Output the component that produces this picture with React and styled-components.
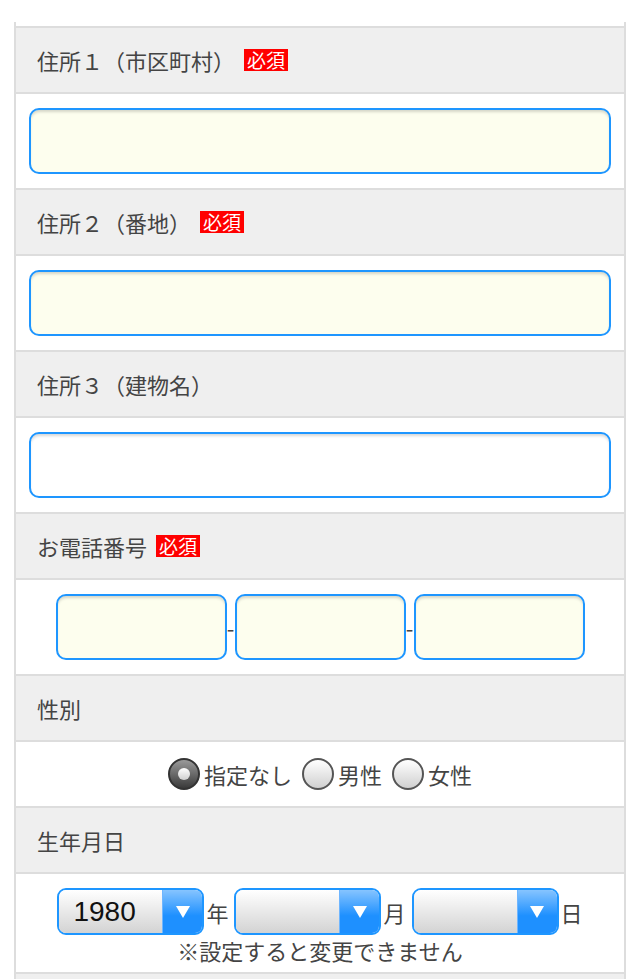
import React from "react";
import styled, { createGlobalStyle } from "styled-components";

const GlobalStyle = createGlobalStyle`
  html, body {
    margin: 0;
    padding: 0;
    background: #fff;
  }
  body {
    font-family: "Noto Sans CJK JP", "Noto Sans", sans-serif;
    color: #444;
  }
  * {
    box-sizing: border-box;
  }
`;

const Page = styled.div`
  padding-top: 22px;
  width: 640px;
`;

const Form = styled.div`
  margin: 0 14px;
  padding-top: 4px;
  border-left: 2px solid #ddd;
  border-right: 2px solid #ddd;
`;

const Head = styled.div`
  display: flex;
  align-items: center;
  height: 68px;
  padding-left: 21px;
  background: #efefef;
  border-top: 2px solid #ddd;
  border-bottom: 2px solid #ddd;
  font-size: 22px;
  line-height: 1;
  color: #444;
`;

const Required = styled.span`
  display: inline-block;
  margin-left: 9px;
  padding: 0 3px;
  background: #f00;
  color: #fff;
  font-size: 19px;
  line-height: 22px;
  height: 22px;
`;

const Body = styled.div`
  display: flex;
  flex-direction: ${({ $column }) => ($column ? "column" : "row")};
  align-items: center;
  justify-content: center;
  min-height: ${({ $h }) => $h || 94}px;
  padding: ${({ $pad }) => $pad || "0 13px"};
`;

const TextInput = styled.input`
  appearance: none;
  display: block;
  width: ${({ $w }) => ($w ? `${$w}px` : "100%")};
  height: 66px;
  margin: 0;
  padding: 0 12px;
  border: 2px solid #1e96ff;
  border-radius: 10px;
  background: ${({ $blank }) => ($blank ? "#fff" : "#fdfeee")};
  box-shadow: inset 0 3px 3px -1px rgba(0, 0, 0, 0.16);
  font-family: inherit;
  font-size: 22px;
  outline: none;
`;

const Dash = styled.span`
  width: 8px;
  text-align: center;
  font-size: 22px;
  line-height: 1;
  color: #444;
`;

const RadioGroup = styled.div`
  display: flex;
  align-items: center;
  gap: 10px;
`;

const RadioLabel = styled.label`
  display: flex;
  align-items: center;
  gap: 4px;
  font-size: 22px;
  color: #444;
`;

const RadioCircle = styled.span`
  position: relative;
  width: 32px;
  height: 32px;
  border-radius: 50%;
  border: 2px solid ${({ $on }) => ($on ? "#333" : "#555")};
  background: ${({ $on }) =>
    $on
      ? "linear-gradient(#9a9a9a, #3a3a3a)"
      : "linear-gradient(#ffffff, #d0d0d0)"};

  &::after {
    content: "";
    display: ${({ $on }) => ($on ? "block" : "none")};
    position: absolute;
    left: 8px;
    top: 8px;
    width: 12px;
    height: 12px;
    border-radius: 50%;
    background: linear-gradient(#ffffff, #cfcfcf);
  }
`;

const DateRow = styled.div`
  display: flex;
  align-items: center;
  gap: 6px;
`;

const DateItem = styled.div`
  display: flex;
  align-items: center;
  gap: 2px;
  font-size: 22px;
  color: #444;
`;

const SelectBox = styled.div`
  display: flex;
  width: 147px;
  height: 47px;
  border: 2px solid #1e96ff;
  border-radius: 9px;
  overflow: hidden;
`;

const Select = styled.select`
  appearance: none;
  flex: 1;
  min-width: 0;
  margin: 0;
  padding: 0 0 0 14px;
  border: none;
  border-radius: 0;
  background: linear-gradient(#ffffff, #d3d3d3);
  font-family: "Liberation Sans", "Noto Sans", sans-serif;
  font-size: 28px;
  color: #111;
  outline: none;
`;

const Arrow = styled.span`
  display: flex;
  align-items: center;
  justify-content: center;
  width: 40px;
  background: linear-gradient(#86c4ff, #1e90ff 60%);
  border-left: 1px solid #6fb6ff;

  &::before {
    content: "";
    border-left: 7px solid transparent;
    border-right: 7px solid transparent;
    border-top: 12px solid #fff;
  }
`;

const Note = styled.div`
  line-height: 30px;
  font-size: 22px;
  color: #444;
`;

const Section = ({ label, required, children }) => (
  <>
    <Head>
      {label}
      {required && <Required>必須</Required>}
    </Head>
    {children}
  </>
);

const DateSelect = ({ value, options, unit }) => (
  <DateItem>
    <SelectBox>
      <Select defaultValue={value}>
        {options.map((o) => (
          <option key={o} value={o}>
            {o}
          </option>
        ))}
      </Select>
      <Arrow />
    </SelectBox>
    {unit}
  </DateItem>
);

const years = ["1980"];
const months = ["", ...Array.from({ length: 12 }, (_, i) => String(i + 1))];
const days = ["", ...Array.from({ length: 31 }, (_, i) => String(i + 1))];

export default function App() {
  return (
    <>
      <GlobalStyle />
      <Page>
        <Form>
          <Section label="住所１（市区町村）" required>
            <Body>
              <TextInput type="text" />
            </Body>
          </Section>

          <Section label="住所２（番地）" required>
            <Body>
              <TextInput type="text" />
            </Body>
          </Section>

          <Section label="住所３（建物名）">
            <Body>
              <TextInput type="text" $blank />
            </Body>
          </Section>

          <Section label="お電話番号" required>
            <Body>
              <TextInput type="tel" $w={171} />
              <Dash>-</Dash>
              <TextInput type="tel" $w={171} />
              <Dash>-</Dash>
              <TextInput type="tel" $w={171} />
            </Body>
          </Section>

          <Section label="性別">
            <Body $h={64}>
              <RadioGroup>
                <RadioLabel>
                  <RadioCircle $on />
                  指定なし
                </RadioLabel>
                <RadioLabel>
                  <RadioCircle />
                  男性
                </RadioLabel>
                <RadioLabel>
                  <RadioCircle />
                  女性
                </RadioLabel>
              </RadioGroup>
            </Body>
          </Section>

          <Section label="生年月日">
            <Body $column $h={98} $pad="14px 13px 7px">
              <DateRow>
                <DateSelect value="1980" options={years} unit="年" />
                <DateSelect value="" options={months} unit="月" />
                <DateSelect value="" options={days} unit="日" />
              </DateRow>
              <Note>※設定すると変更できません</Note>
            </Body>
          </Section>

          <Head />
        </Form>
      </Page>
    </>
  );
}
